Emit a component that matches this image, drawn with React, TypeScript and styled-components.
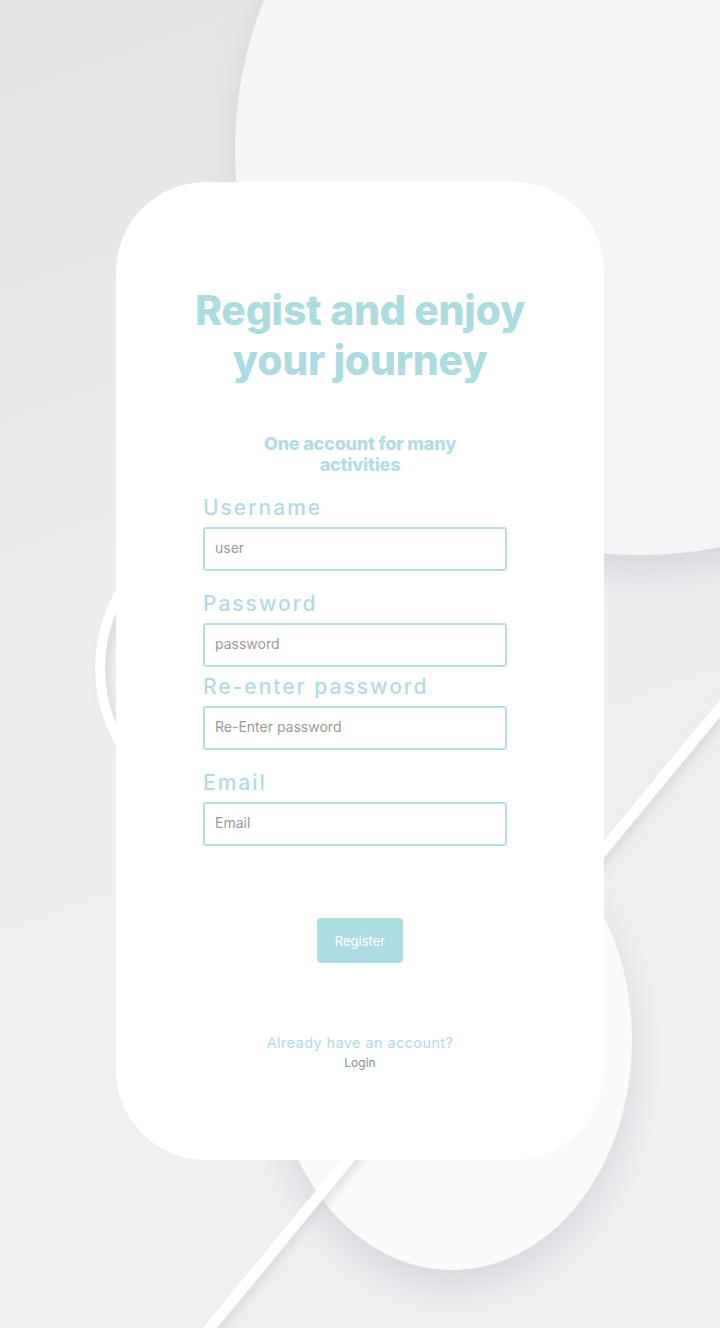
import React from 'react'
import styled, { createGlobalStyle } from 'styled-components'

const GlobalStyle = createGlobalStyle`
  body {
    margin: 0;
    font-family: Inter, "Noto Sans", sans-serif;
  }
`

const Page = styled.div`
  position: relative;
  width: 720px;
  height: 1328px;
  overflow: hidden;
  background: linear-gradient(160deg, #e2e3e5 0%, #eceef0 45%, #eef0f2 100%);
  display: flex;
  justify-content: center;
  padding-top: 182px;
  box-sizing: border-box;
`

const Backdrop = styled.svg`
  position: absolute;
  inset: 0;
`

const Card = styled.div`
  position: relative;
  width: 488px;
  height: 978px;
  background: #fff;
  border-radius: 90px;
  display: flex;
  flex-direction: column;
  align-items: center;
  padding-top: 103px;
  box-sizing: border-box;
`

const Title = styled.h1`
  margin: 0;
  font-size: 41px;
  line-height: 50px;
  font-weight: 800;
  letter-spacing: -0.3px;
  color: #addbe2;
  text-align: center;
`

const Subtitle = styled.h2`
  margin: 48px 0 0;
  width: 220px;
  font-size: 18px;
  line-height: 21px;
  font-weight: 800;
  letter-spacing: -0.2px;
  color: #b2dce3;
  text-align: center;
`

const Form = styled.form`
  align-self: flex-start;
  margin: 20px 0 0 87px;
  width: 304px;
  display: flex;
  flex-direction: column;
`

const Field = styled.div<{ $gap: number }>`
  display: flex;
  flex-direction: column;
  margin-top: ${p => p.$gap}px;
`

const Label = styled.label`
  font-size: 21px;
  line-height: 26px;
  font-weight: 500;
  letter-spacing: 2px;
  color: #b0dbe2;
  margin-bottom: 6px;
`

const Input = styled.input`
  height: 44px;
  box-sizing: border-box;
  border: 2px solid #b6dee4;
  border-radius: 3px;
  padding: 0 10px 4px;
  font-family: inherit;
  font-size: 14px;
  color: #555;
  outline: none;
  &::placeholder {
    color: #9a9a9a;
  }
`

const Button = styled.button`
  margin-top: 72px;
  width: 86px;
  height: 45px;
  border: none;
  border-radius: 4px;
  background: #addce3;
  color: #fff;
  font-family: inherit;
  font-size: 13px;
  cursor: pointer;
`

const Question = styled.p`
  margin: 70px 0 0;
  font-size: 14.5px;
  line-height: 20px;
  letter-spacing: 0.4px;
  color: #b0dae1;
`

const LoginLink = styled.a`
  font-size: 12px;
  line-height: 20px;
  color: #8d8d8d;
  text-decoration: none;
  cursor: pointer;
`

const fields = [
  { label: 'Username', placeholder: 'user', type: 'text', gap: 0 },
  { label: 'Password', placeholder: 'password', type: 'password', gap: 20 },
  { label: 'Re-enter password', placeholder: 'Re-Enter password', type: 'password', gap: 7 },
  { label: 'Email', placeholder: 'Email', type: 'email', gap: 20 },
]

const App: React.FC = () => {
  return (
    <>
      <GlobalStyle />
      <Page>
        <Backdrop width="720" height="1328" viewBox="0 0 720 1328">
          <defs>
            <filter id="soft" x="-30%" y="-30%" width="160%" height="160%">
              <feDropShadow dx="0" dy="18" stdDeviation="16" floodColor="#b9bcc2" floodOpacity="0.45" />
            </filter>
            <filter id="thin" x="-10%" y="-10%" width="120%" height="120%">
              <feDropShadow dx="4" dy="4" stdDeviation="4" floodColor="#c4c7cc" floodOpacity="0.5" />
            </filter>
          </defs>
          <circle cx="640" cy="150" r="405" fill="#f4f5f7" filter="url(#soft)" />
          <circle cx="252" cy="668" r="152" fill="none" stroke="#ffffff" strokeWidth="10" filter="url(#thin)" />
          <ellipse cx="452" cy="1040" rx="180" ry="230" fill="#fafafa" filter="url(#soft)" />
          <line x1="200" y1="1340" x2="735" y2="690" stroke="#ffffff" strokeWidth="11" filter="url(#thin)" />
        </Backdrop>
        <Card>
          <Title>
            Regist and enjoy
            <br />
            your journey
          </Title>
          <Subtitle>One account for many activities</Subtitle>
          <Form onSubmit={e => e.preventDefault()}>
            {fields.map(f => (
              <Field key={f.label} $gap={f.gap}>
                <Label>{f.label}</Label>
                <Input type={f.type} placeholder={f.placeholder} />
              </Field>
            ))}
          </Form>
          <Button type="button">Register</Button>
          <Question>Already have an account?</Question>
          <LoginLink>Login</LoginLink>
        </Card>
      </Page>
    </>
  )
}

export default App
